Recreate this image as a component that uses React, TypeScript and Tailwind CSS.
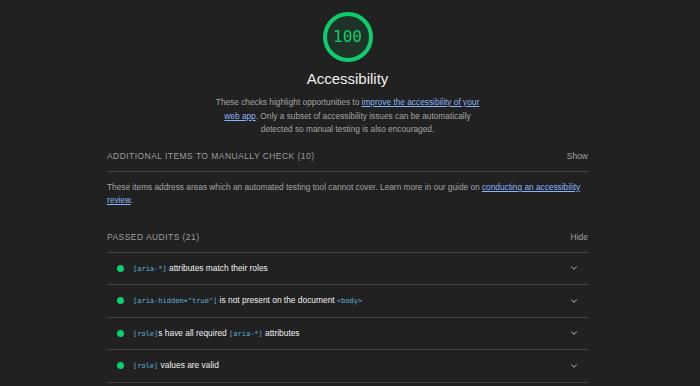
import { ChevronDown } from 'lucide-react';

type Audit = {
  parts: { text: string; code?: boolean }[];
};

const audits: Audit[] = [
  { parts: [{ text: '[aria-*]', code: true }, { text: ' attributes match their roles' }] },
  {
    parts: [
      { text: '[aria-hidden="true"]', code: true },
      { text: ' is not present on the document ' },
      { text: '<body>', code: true },
    ],
  },
  {
    parts: [
      { text: '[role]', code: true },
      { text: 's have all required ' },
      { text: '[aria-*]', code: true },
      { text: ' attributes' },
    ],
  },
  { parts: [{ text: '[role]', code: true }, { text: ' values are valid' }] },
];

function Gauge() {
  return (
    <div className="relative h-[50px] w-[50px]">
      <svg viewBox="0 0 50 50" className="h-[50px] w-[50px]">
        <circle cx="25" cy="25" r="23" fill="#0cce6b" fillOpacity="0.1" stroke="#0cce6b" strokeWidth="4" />
      </svg>
      <div
        className="absolute inset-0 flex items-center justify-center text-[16px] text-[#0cce6b]"
        style={{ fontFamily: '"DejaVu Sans Mono", "Liberation Mono", monospace' }}
      >
        100
      </div>
    </div>
  );
}

function Code({ children }: { children: string }) {
  return (
    <code
      className="text-[7px] text-[#58b2dc]"
      style={{ fontFamily: '"DejaVu Sans Mono", "Liberation Mono", monospace' }}
    >
      {children}
    </code>
  );
}

function GroupHeader({ title, action }: { title: string; action: string }) {
  return (
    <div className="flex h-[30px] items-center justify-between border-b border-[#424242]">
      <span className="text-[8.5px] uppercase tracking-[0.45px] text-[#9e9e9e]">{title}</span>
      <span className="text-[8.5px] text-[#a0a0a0]">{action}</span>
    </div>
  );
}

export default function App() {
  return (
    <div
      className="min-h-[386px] w-full bg-[#212121] pt-[12px]"
      style={{ fontFamily: '"Liberation Sans", Arial, sans-serif' }}
    >
      <div className="ml-[107px] w-[481px]">
        <div className="flex flex-col items-center">
          <Gauge />
          <h1 className="mt-[8px] text-[15px] leading-[18px] text-[#f0f0f0]">Accessibility</h1>
          <p className="mt-[8px] w-[275px] text-center text-[8.3px] leading-[13.5px] text-[#a3a3a3]">
            These checks highlight opportunities to{' '}
            <a className="text-[#8ab4f8] underline">improve the accessibility of your web app</a>. Only a
            subset of accessibility issues can be automatically detected so manual testing is also
            encouraged.
          </p>
        </div>

        <div className="mt-[5px]">
          <GroupHeader title="Additional items to manually check (10)" action="Show" />
          <p className="pt-[9.5px] text-[8.3px] leading-[13px] text-[#a3a3a3]">
            These items address areas which an automated testing tool cannot cover. Learn more in our guide on{' '}
            <a className="text-[#8ab4f8] underline">conducting an accessibility review</a>.
          </p>
        </div>

        <div className="mt-[15.5px]">
          <GroupHeader title="Passed audits (21)" action="Hide" />
          {audits.map((audit, i) => (
            <div key={i} className="flex h-[32.5px] items-center border-b border-[#424242] pl-[10px] pr-[9px]">
              <span className="h-[7px] w-[7px] rounded-full bg-[#0cce6b]" />
              <span className="ml-[9px] flex-1 text-[8.4px] text-[#f0f0f0]">
                {audit.parts.map((p, j) => (p.code ? <Code key={j}>{p.text}</Code> : <span key={j}>{p.text}</span>))}
              </span>
              <ChevronDown className="h-[10px] w-[10px] text-[#9e9e9e]" strokeWidth={2.5} />
            </div>
          ))}
        </div>
      </div>
    </div>
  );
}
